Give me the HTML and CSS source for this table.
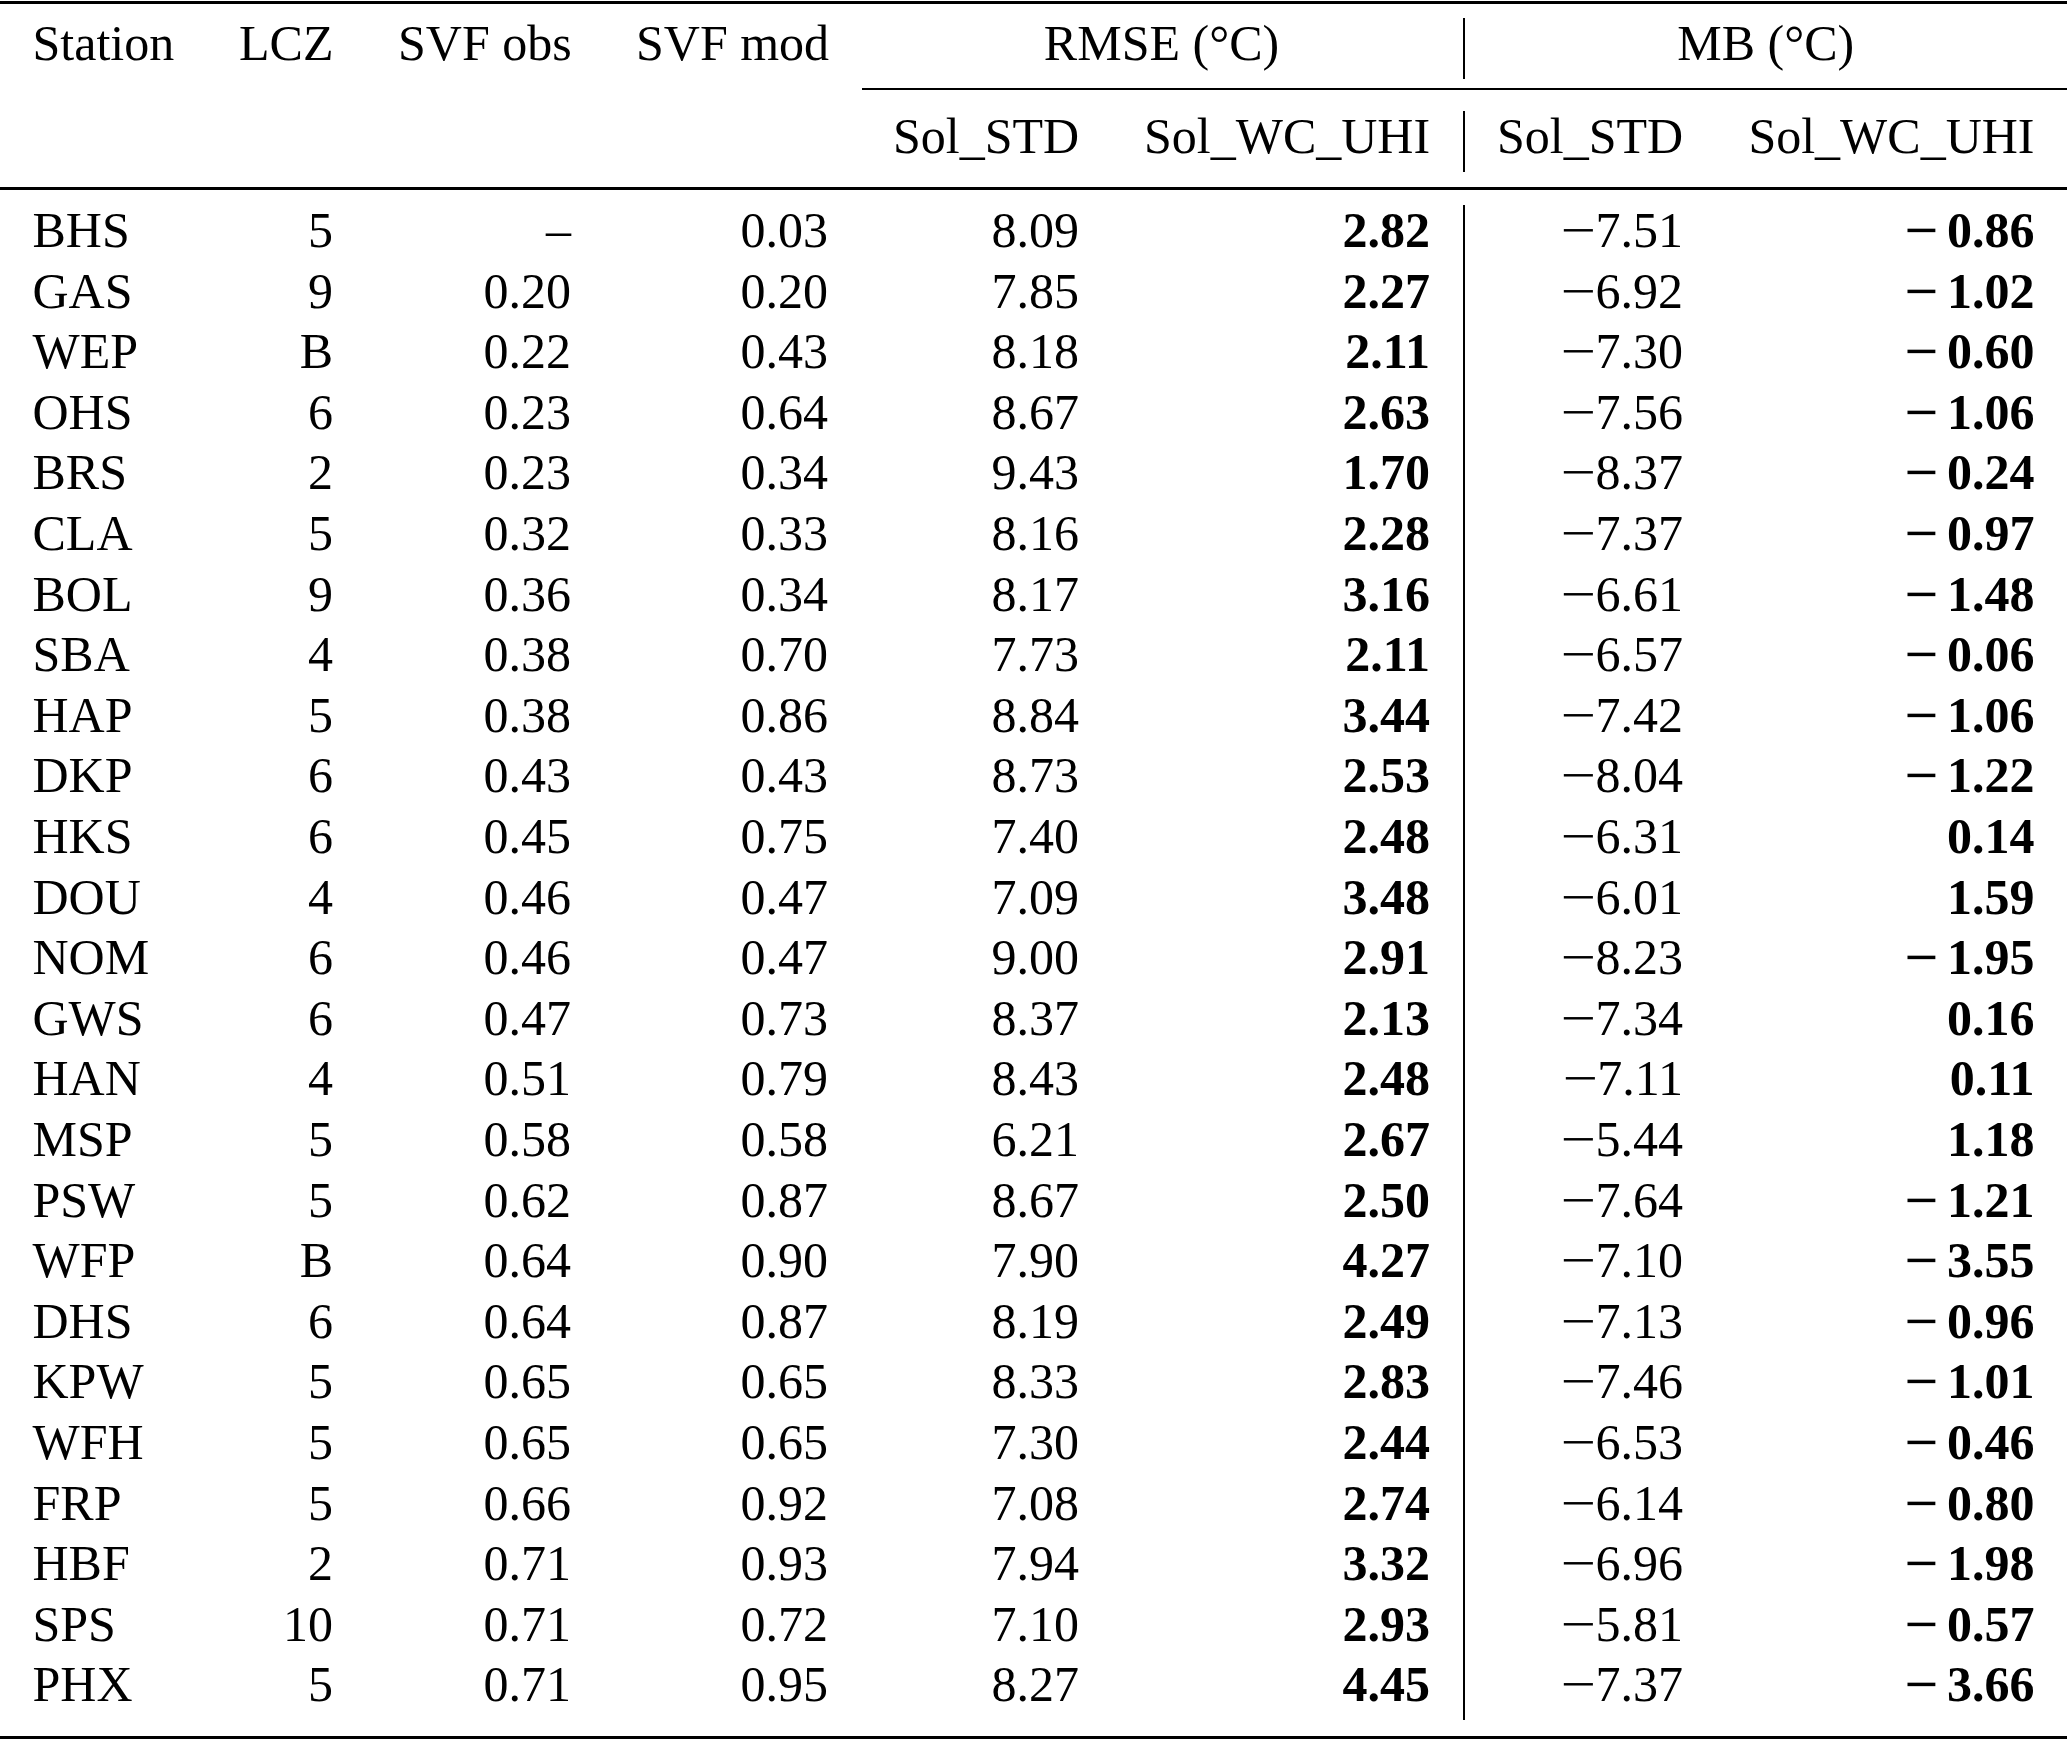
FILE: index.html
```html
<!DOCTYPE html>
<html lang="en">
<head>
<meta charset="utf-8">
<title>Station statistics</title>
<link rel="stylesheet" href="styles.css">
</head>
<body>
<div class="tbl">
  <div class="rule top"></div>
  <div class="grid head1">
    <div class="vl"></div>
    <div class="c l">Station</div>
    <div class="c">LCZ</div>
    <div class="c">SVF obs</div>
    <div class="c">SVF mod</div>
    <div class="c ctr rmse">RMSE (°C)</div>
    <div class="c ctr mb">MB (°C)</div>
  </div>
  <div class="rule cmid"></div>
  <div class="grid head2">
    <div class="vl"></div>
    <div class="c"></div><div class="c"></div><div class="c"></div><div class="c"></div>
    <div class="c">Sol_STD</div>
    <div class="c">Sol_WC_UHI</div>
    <div class="c">Sol_STD</div>
    <div class="c">Sol_WC_UHI</div>
  </div>
  <div class="rule mid"></div>
  <div class="grid body">
    <div class="vl rows25"></div>
    <div class="c l">BHS</div><div class="c">5</div><div class="c">–</div><div class="c">0.03</div><div class="c">8.09</div><div class="c b">2.82</div><div class="c"><span class="m">−</span>7.51</div><div class="c b"><span class="mb-">−</span>0.86</div>
    <div class="c l">GAS</div><div class="c">9</div><div class="c">0.20</div><div class="c">0.20</div><div class="c">7.85</div><div class="c b">2.27</div><div class="c"><span class="m">−</span>6.92</div><div class="c b"><span class="mb-">−</span>1.02</div>
    <div class="c l">WEP</div><div class="c">B</div><div class="c">0.22</div><div class="c">0.43</div><div class="c">8.18</div><div class="c b">2.11</div><div class="c"><span class="m">−</span>7.30</div><div class="c b"><span class="mb-">−</span>0.60</div>
    <div class="c l">OHS</div><div class="c">6</div><div class="c">0.23</div><div class="c">0.64</div><div class="c">8.67</div><div class="c b">2.63</div><div class="c"><span class="m">−</span>7.56</div><div class="c b"><span class="mb-">−</span>1.06</div>
    <div class="c l">BRS</div><div class="c">2</div><div class="c">0.23</div><div class="c">0.34</div><div class="c">9.43</div><div class="c b">1.70</div><div class="c"><span class="m">−</span>8.37</div><div class="c b"><span class="mb-">−</span>0.24</div>
    <div class="c l">CLA</div><div class="c">5</div><div class="c">0.32</div><div class="c">0.33</div><div class="c">8.16</div><div class="c b">2.28</div><div class="c"><span class="m">−</span>7.37</div><div class="c b"><span class="mb-">−</span>0.97</div>
    <div class="c l">BOL</div><div class="c">9</div><div class="c">0.36</div><div class="c">0.34</div><div class="c">8.17</div><div class="c b">3.16</div><div class="c"><span class="m">−</span>6.61</div><div class="c b"><span class="mb-">−</span>1.48</div>
    <div class="c l">SBA</div><div class="c">4</div><div class="c">0.38</div><div class="c">0.70</div><div class="c">7.73</div><div class="c b">2.11</div><div class="c"><span class="m">−</span>6.57</div><div class="c b"><span class="mb-">−</span>0.06</div>
    <div class="c l">HAP</div><div class="c">5</div><div class="c">0.38</div><div class="c">0.86</div><div class="c">8.84</div><div class="c b">3.44</div><div class="c"><span class="m">−</span>7.42</div><div class="c b"><span class="mb-">−</span>1.06</div>
    <div class="c l">DKP</div><div class="c">6</div><div class="c">0.43</div><div class="c">0.43</div><div class="c">8.73</div><div class="c b">2.53</div><div class="c"><span class="m">−</span>8.04</div><div class="c b"><span class="mb-">−</span>1.22</div>
    <div class="c l">HKS</div><div class="c">6</div><div class="c">0.45</div><div class="c">0.75</div><div class="c">7.40</div><div class="c b">2.48</div><div class="c"><span class="m">−</span>6.31</div><div class="c b">0.14</div>
    <div class="c l">DOU</div><div class="c">4</div><div class="c">0.46</div><div class="c">0.47</div><div class="c">7.09</div><div class="c b">3.48</div><div class="c"><span class="m">−</span>6.01</div><div class="c b">1.59</div>
    <div class="c l">NOM</div><div class="c">6</div><div class="c">0.46</div><div class="c">0.47</div><div class="c">9.00</div><div class="c b">2.91</div><div class="c"><span class="m">−</span>8.23</div><div class="c b"><span class="mb-">−</span>1.95</div>
    <div class="c l">GWS</div><div class="c">6</div><div class="c">0.47</div><div class="c">0.73</div><div class="c">8.37</div><div class="c b">2.13</div><div class="c"><span class="m">−</span>7.34</div><div class="c b">0.16</div>
    <div class="c l">HAN</div><div class="c">4</div><div class="c">0.51</div><div class="c">0.79</div><div class="c">8.43</div><div class="c b">2.48</div><div class="c"><span class="m">−</span>7.11</div><div class="c b">0.11</div>
    <div class="c l">MSP</div><div class="c">5</div><div class="c">0.58</div><div class="c">0.58</div><div class="c">6.21</div><div class="c b">2.67</div><div class="c"><span class="m">−</span>5.44</div><div class="c b">1.18</div>
    <div class="c l">PSW</div><div class="c">5</div><div class="c">0.62</div><div class="c">0.87</div><div class="c">8.67</div><div class="c b">2.50</div><div class="c"><span class="m">−</span>7.64</div><div class="c b"><span class="mb-">−</span>1.21</div>
    <div class="c l">WFP</div><div class="c">B</div><div class="c">0.64</div><div class="c">0.90</div><div class="c">7.90</div><div class="c b">4.27</div><div class="c"><span class="m">−</span>7.10</div><div class="c b"><span class="mb-">−</span>3.55</div>
    <div class="c l">DHS</div><div class="c">6</div><div class="c">0.64</div><div class="c">0.87</div><div class="c">8.19</div><div class="c b">2.49</div><div class="c"><span class="m">−</span>7.13</div><div class="c b"><span class="mb-">−</span>0.96</div>
    <div class="c l">KPW</div><div class="c">5</div><div class="c">0.65</div><div class="c">0.65</div><div class="c">8.33</div><div class="c b">2.83</div><div class="c"><span class="m">−</span>7.46</div><div class="c b"><span class="mb-">−</span>1.01</div>
    <div class="c l">WFH</div><div class="c">5</div><div class="c">0.65</div><div class="c">0.65</div><div class="c">7.30</div><div class="c b">2.44</div><div class="c"><span class="m">−</span>6.53</div><div class="c b"><span class="mb-">−</span>0.46</div>
    <div class="c l">FRP</div><div class="c">5</div><div class="c">0.66</div><div class="c">0.92</div><div class="c">7.08</div><div class="c b">2.74</div><div class="c"><span class="m">−</span>6.14</div><div class="c b"><span class="mb-">−</span>0.80</div>
    <div class="c l">HBF</div><div class="c">2</div><div class="c">0.71</div><div class="c">0.93</div><div class="c">7.94</div><div class="c b">3.32</div><div class="c"><span class="m">−</span>6.96</div><div class="c b"><span class="mb-">−</span>1.98</div>
    <div class="c l">SPS</div><div class="c">10</div><div class="c">0.71</div><div class="c">0.72</div><div class="c">7.10</div><div class="c b">2.93</div><div class="c"><span class="m">−</span>5.81</div><div class="c b"><span class="mb-">−</span>0.57</div>
    <div class="c l">PHX</div><div class="c">5</div><div class="c">0.71</div><div class="c">0.95</div><div class="c">8.27</div><div class="c b">4.45</div><div class="c"><span class="m">−</span>7.37</div><div class="c b"><span class="mb-">−</span>3.66</div>
  </div>
  <div class="rule bottom"></div>
</div>
</body>
</html>
```

FILE: styles.css
```css
html, body {
  margin: 0;
  padding: 0;
  background: #ffffff;
}

body {
  font-family: "Liberation Serif", "Times New Roman", serif;
  font-size: 50px;
  color: #000000;
}

.tbl {
  width: 2067px;
  padding-top: 1px;
}

.rule {
  background: #000000;
}

.rule.top {
  height: 2.5px;
  margin-bottom: 14.5px;
}

.rule.cmid {
  height: 2px;
  margin-left: 862px;
  margin-top: 9px;
  margin-bottom: 21.5px;
}

.rule.mid {
  height: 2.5px;
  margin-top: 15.4px;
  margin-bottom: 15.5px;
}

.rule.bottom {
  height: 3px;
  margin-top: 16px;
}

.grid {
  display: grid;
  grid-template-columns: 206.5px 159px 238px 257px 251px 351px 2px 251px 1fr;
  grid-auto-rows: 60.6px;
}

.vl {
  grid-column: 7;
  grid-row: 1;
  background: #000000;
}

.vl.rows25 {
  grid-row: 1 / 26;
}

.c {
  padding: 0 32.5px;
  line-height: 51px;
  text-align: right;
  white-space: nowrap;
}

.c.l {
  text-align: left;
}

.c.ctr {
  text-align: center;
}

.rmse {
  grid-column: 5 / span 2;
}

.mb {
  grid-column: 8 / span 2;
}

.b {
  font-weight: bold;
}

.m {
  display: inline-block;
  transform: scaleX(1.25);
  margin: 0 3.5px;
}

.mb- {
  display: inline-block;
  transform: scaleX(1.2);
  margin-right: 11.5px;
}
```
